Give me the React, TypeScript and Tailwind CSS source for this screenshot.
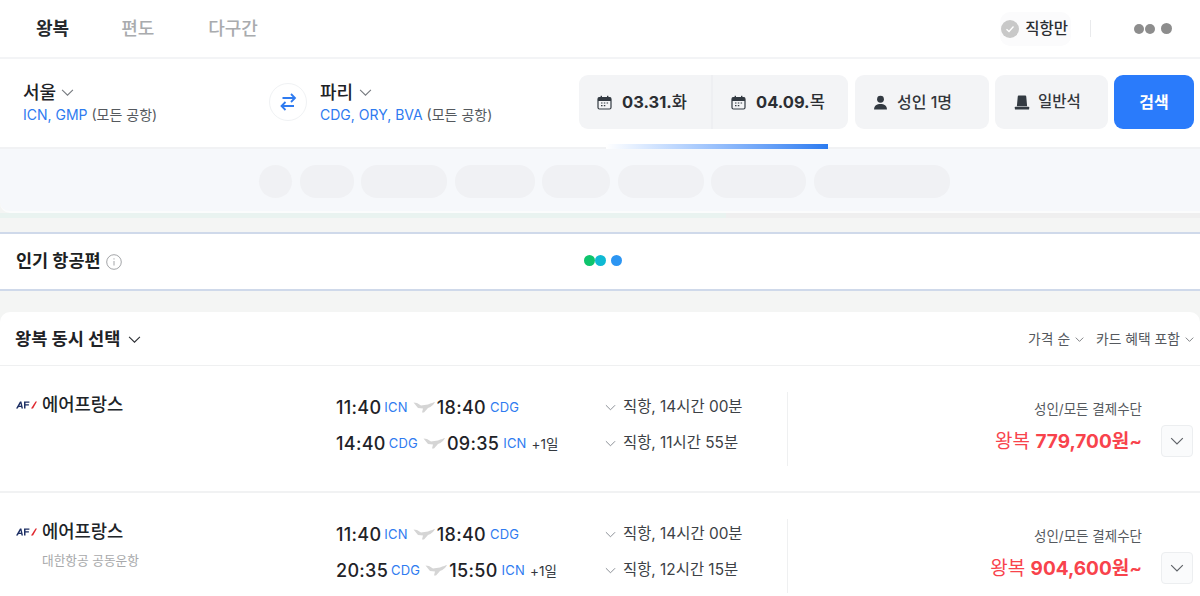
import React from 'react';

const FONT = "font-['Inter','Noto_Sans_CJK_KR',sans-serif]";

const Chevron = ({ size = 12, className = '' }: { size?: number; className?: string }) => (
  <svg width={size} height={size} viewBox="0 0 12 12" fill="none" stroke="currentColor" strokeWidth="1" className={className}>
    <path d="M1 3.5 6 8.5 11 3.5" />
  </svg>
);

const Calendar = () => (
  <svg width="15" height="15" viewBox="0 0 15 15" className="text-[#333a42]">
    <rect x="1" y="2.5" width="13" height="11.5" rx="1.5" fill="none" stroke="currentColor" strokeWidth="1.2" />
    <path d="M1 3.5a1 1 0 0 1 1-1h11a1 1 0 0 1 1 1V6H1z" fill="currentColor" />
    <rect x="3.6" y="0.8" width="1.4" height="2.6" fill="currentColor" />
    <rect x="10" y="0.8" width="1.4" height="2.6" fill="currentColor" />
    <path d="M4 8h1.5M6.8 8h1.5M9.6 8h1.5M4 10.6h1.5M6.8 10.6h1.5" stroke="currentColor" strokeWidth="1.2" />
  </svg>
);

const Person = () => (
  <svg width="15" height="15" viewBox="0 0 14 14" fill="#333a42">
    <circle cx="7" cy="4" r="3.2" />
    <path d="M1 13.5c0-3.400 2.600-5 6-5s6 1.600 6 5z" />
  </svg>
);

const Seat = () => (
  <svg width="16" height="15" viewBox="0 0 15 14" fill="#333a42">
    <path d="M3.500 1.500a1 1 0 0 1 1-1h6a1 1 0 0 1 1 1l.8 9H2.700z" />
    <rect x="0.800" y="11" width="13.400" height="2.600" rx="0.500" />
  </svg>
);

const Plane = () => (
  <svg width="22" height="12" viewBox="0 0 22 12" fill="#d5d5d5">
    <path d="M0.500 1.500 4 2 8 4.500 15 3.500Q20 1.500 22 1 20 5 15 7L11 11.500H9L10 7.500 5 7z" />
  </svg>
);

const AfLogo = () => (
  <svg width="21" height="8" viewBox="0 0 21 8">
    <path d="M0 7.500 4 .5h1.400L7 7.500H5.500L5.200 6H2.600L1.800 7.500zM3.300 4.800h1.700L4.600 2.500z" fill="#1d2f64" />
    <path d="M8 7.500V.5h5.400v1.300H9.500v1.500h3.400v1.200H9.500v3z" fill="#1d2f64" />
    <path d="M15 7.500 19.500.5H21L17 7.500z" fill="#e0272e" />
  </svg>
);

const Leg = ({ dep, from, arr, to, plus }: { dep: string; from: string; arr: string; to: string; plus?: boolean }) => (
  <div className="flex items-center h-[36px] whitespace-nowrap">
    <span className="text-[18px] font-medium text-[#1f2328] tracking-[0.3px]">{dep}</span>
    <span className="ml-[3px] text-[13px] text-[#2f7bf0] tracking-[0.2px] translate-y-[1px]">{from}</span>
    <span className="ml-[5px] mr-[2px] flex"><Plane /></span>
    <span className="text-[18px] font-medium text-[#1f2328] tracking-[0.3px]">{arr}</span>
    <span className="ml-[4px] text-[13px] text-[#2f7bf0] tracking-[0.2px] translate-y-[1px]">{to}</span>
    {plus && <span className="ml-[5px] text-[13.500px] text-[#33383e] translate-y-[1px]">+1일</span>}
  </div>
);

const Duration = ({ text }: { text: string }) => (
  <div className="flex items-center h-[36px] whitespace-nowrap">
    <Chevron size={11} className="text-[#80868c] mr-[7px]" />
    <span className="text-[15.400px] text-[#3c4146]">{text}</span>
  </div>
);

type Flight = {
  sub?: string;
  legs: { dep: string; from: string; arr: string; to: string; plus?: boolean; dur: string }[];
  price: string;
};

const flights: Flight[] = [
  {
    legs: [
      { dep: '11:40', from: 'ICN', arr: '18:40', to: 'CDG', dur: '직항, 14시간 00분' },
      { dep: '14:40', from: 'CDG', arr: '09:35', to: 'ICN', plus: true, dur: '직항, 11시간 55분' },
    ],
    price: '779,700',
  },
  {
    sub: '대한항공 공동운항',
    legs: [
      { dep: '11:40', from: 'ICN', arr: '18:40', to: 'CDG', dur: '직항, 14시간 00분' },
      { dep: '20:35', from: 'CDG', arr: '15:50', to: 'ICN', plus: true, dur: '직항, 12시간 15분' },
    ],
    price: '904,600',
  },
];

const FlightRow = ({ f }: { f: Flight }) => (
  <div className="flex h-[127px] pt-[23px] pl-[16px] border-b-2 border-[#f1f2f3] last:border-b-0">
    <div className="w-[320px] shrink-0 pt-[1px]">
      <div className="flex items-center gap-[5px] h-[30px]">
        <AfLogo />
        <span className="text-[17.700px] text-[#202428] font-medium">에어프랑스</span>
      </div>
      {f.sub && <div className="ml-[26px] mt-[4px] text-[12.700px] text-[#a8a9ab]">{f.sub}</div>}
    </div>
    <div className="w-[269px] shrink-0">
      {f.legs.map((l) => <Leg key={l.dep} {...l} />)}
    </div>
    <div className="w-[182px] shrink-0">
      {f.legs.map((l) => <Duration key={l.dep} text={l.dur} />)}
    </div>
    <div className="w-[355px] shrink-0 h-[74px] mt-[3px] border-l border-[#eff0f1] flex flex-col items-end pt-[7px]">
      <span className="text-[13.500px] text-[#55595e]">성인/모든 결제수단</span>
      <span className="mt-[9px] text-[19px] text-[#f8434c] whitespace-nowrap">왕복 <b className="font-bold">{f.price}</b><span className="font-semibold">원~</span></span>
    </div>
    <div className="ml-[19px] mt-[36px] w-[32px] h-[32px] rounded-[4px] border border-[#eceef0] bg-[#fafbfc] flex items-center justify-center text-[#5f6368]">
      <Chevron size={14} />
    </div>
  </div>
);

export default function App() {
  return (
    <div className={`${FONT} w-[1200px] h-[596px] overflow-hidden bg-[#f4f5f4]`}>
      {/* tabs */}
      <div className="h-[59px] bg-white border-b-2 border-[#f3f4f6] flex items-center pl-[36px] pr-[28px]">
        <span className="text-[18px] font-bold text-[#26292d]">왕복</span>
        <span className="ml-[52px] text-[18px] font-medium text-[#a9abae]">편도</span>
        <span className="ml-[54px] text-[18px] font-medium text-[#a9abae]">다구간</span>
        <div className="ml-auto flex items-center">
          <div className="flex items-center h-[34px] pl-[1px] pr-[3px] rounded-[10px] bg-[#fbfbfc]">
            <span className="w-[18px] h-[18px] rounded-full bg-[#c8c8c8] flex items-center justify-center mr-[6px]">
              <svg width="10" height="10" viewBox="0 0 10 10" fill="none" stroke="#fff" strokeWidth="1.300"><path d="M1.500 5.200 4 7.500 8.500 2.500" /></svg>
            </span>
            <span className="text-[15.500px] font-medium text-[#2b2e33]">직항만</span>
          </div>
          <span className="ml-[19px] w-px h-[17px] bg-[#e9eaec]" />
          <div className="ml-[43px] flex items-center">
            <span className="w-[10px] h-[10px] rounded-full bg-[#8d8d8d]" />
            <span className="ml-[1px] w-[10px] h-[10px] rounded-full bg-[#8d8d8d]" />
            <span className="ml-[6px] w-[11px] h-[11px] rounded-full bg-[#8d8d8d]" />
          </div>
        </div>
      </div>

      {/* search */}
      <div className="relative h-[90px] bg-white border-b-2 border-[#f1f2f4] flex items-start pt-[16px] pl-[23px]">
        <div className="w-[246px] shrink-0 pt-[5px]">
          <div className="flex items-center gap-[5px] h-[24px]">
            <span className="text-[18px] font-medium text-[#1e2226]">서울</span>
            <Chevron size={13} className="text-[#777b80]" />
          </div>
          <div className="text-[14px] text-[#55595e] whitespace-nowrap"><span className="text-[#2f7bf0]">ICN, GMP</span> (모든 공항)</div>
        </div>
        <div className="w-[38px] h-[38px] mt-[8px] rounded-full border border-[#f0f2f4] flex items-center justify-center shrink-0">
          <svg width="18" height="18" viewBox="0 0 18 18" fill="none" stroke="#2f7bf0" strokeWidth="1.800">
            <path d="M3.500 5H16M12 1 16 5 12 9" />
            <path d="M15 13H2.500M6.500 9 2.500 13 6.500 17" />
          </svg>
        </div>
        <div className="w-[259px] ml-[13px] shrink-0 pt-[5px]">
          <div className="flex items-center gap-[6px] h-[24px]">
            <span className="text-[18px] font-medium text-[#1e2226]">파리</span>
            <Chevron size={13} className="text-[#777b80]" />
          </div>
          <div className="text-[14px] text-[#55595e] whitespace-nowrap"><span className="text-[#2f7bf0]">CDG, ORY, BVA</span> (모든 공항)</div>
        </div>
        <div className="w-[269px] h-[54px] rounded-[9px] bg-[#f3f4f6] flex shrink-0">
          <div className="w-[134px] flex items-center pl-[18px] gap-[10px] border-r-2 border-[#eeeff2]">
            <Calendar />
            <span className="text-[16.500px] font-bold text-[#2b2e33] whitespace-nowrap">03.31.<span className="font-medium">화</span></span>
          </div>
          <div className="flex-1 flex items-center pl-[18px] gap-[10px]">
            <Calendar />
            <span className="text-[16.500px] font-bold text-[#2b2e33] whitespace-nowrap">04.09.<span className="font-medium">목</span></span>
          </div>
        </div>
        <div className="ml-[7px] w-[134px] h-[54px] rounded-[9px] bg-[#f3f4f6] flex items-center pl-[18px] gap-[9px] shrink-0">
          <Person />
          <span className="text-[16px] font-medium text-[#33373c]">성인 1명</span>
        </div>
        <div className="ml-[6px] w-[113px] h-[54px] rounded-[9px] bg-[#f3f4f6] flex items-center pl-[19px] gap-[8px] shrink-0">
          <Seat />
          <span className="text-[15.500px] font-medium text-[#33373c]">일반석</span>
        </div>
        <div className="ml-[6px] w-[80px] h-[54px] rounded-[9px] bg-[#2a7bfb] flex items-center justify-center shrink-0">
          <span className="text-[16px] font-bold text-white">검색</span>
        </div>
        <div className="absolute left-[606px] -bottom-[2px] w-[222px] h-[5px] bg-gradient-to-r from-white to-[#2a7bf0]" />
      </div>

      {/* skeleton filter band */}
      <div className="h-[64px] bg-[#f6f8fb] rounded-bl-[10px] border-b-2 border-[#fbfcfc] flex justify-start pt-[16px] pl-[259px] gap-[7.500px]">
        <div className="w-[33px] h-[33px] rounded-full bg-[#f0f1f4]" />
        <div className="w-[54px] h-[33px] rounded-[16px] bg-[#f0f1f4]" />
        <div className="w-[86px] h-[33px] rounded-[16px] bg-[#f0f1f4]" />
        <div className="w-[80px] h-[33px] rounded-[16px] bg-[#f0f1f4]" />
        <div className="w-[68px] h-[33px] rounded-[16px] bg-[#f0f1f4]" />
        <div className="w-[86px] h-[33px] rounded-[16px] bg-[#f0f1f4]" />
        <div className="w-[95px] h-[33px] rounded-[16px] bg-[#f0f1f4]" />
        <div className="w-[136px] h-[33px] rounded-[16px] bg-[#f0f1f4]" />
      </div>
      <div className="h-[5px] bg-[#efefef]">
        <div className="w-[726px] h-full bg-[#e9f3f0]" />
      </div>

      {/* popular */}
      <div className="mt-[14px] h-[59px] bg-white border-y-2 border-[#cfd9ea] flex items-center pl-[16px] pr-[578px]">
        <span className="text-[17.500px] font-bold text-[#1c1f23]">인기 항공편</span>
        <svg width="16" height="16" viewBox="0 0 16 16" fill="none" stroke="#a3a5a8" className="ml-[5px]">
          <circle cx="8" cy="8" r="7.300" />
          <path d="M8 7v4.500M8 4.300v1.200" />
        </svg>
        <div className="ml-auto flex items-center -translate-y-[1px]">
          <span className="w-[11px] h-[11px] rounded-full bg-[#0ec46d]" />
          <span className="ml-[0.500px] w-[11px] h-[11px] rounded-full bg-[#0fb9d3]" />
          <span className="ml-[5px] w-[11px] h-[11px] rounded-full bg-[#2c95f2]" />
        </div>
      </div>

      {/* results */}
      <div className="mt-[21px] bg-white rounded-t-[10px]">
        <div className="h-[54px] pt-[1px] border-b border-[#eff0f1] flex items-center pl-[15px] pr-[6px]">
          <span className="text-[17.600px] font-bold text-[#1e2226]">왕복 동시 선택</span>
          <Chevron size={13} className="ml-[8px] text-[#2b2e33]" />
          <div className="ml-auto flex items-center text-[13.800px] text-[#55595e]">
            <span>가격 순</span>
            <Chevron size={9} className="ml-[5px]" />
            <span className="ml-[12px]">카드 혜택 포함</span>
            <Chevron size={9} className="ml-[5px]" />
          </div>
        </div>
        {flights.map((f) => <FlightRow key={f.price} f={f} />)}
      </div>
    </div>
  );
}
